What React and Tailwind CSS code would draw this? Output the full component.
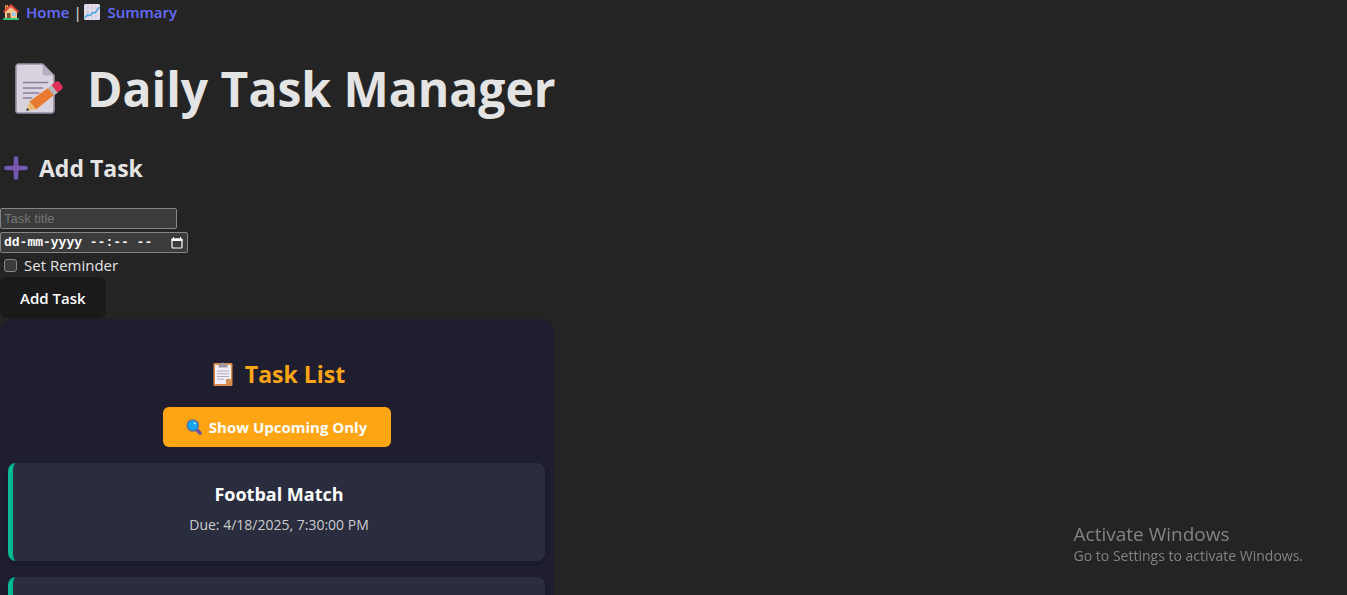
import React from "react";

function HouseIcon({ className }) {
  return (
    <svg viewBox="0 0 16 16" className={className} aria-hidden="true">
      <path d="M2 1h3v5H2z" fill="#e6a23c" />
      <path d="M3 1h1v4H3z" fill="#8a5a44" />
      <path d="M2 8l6-6 6 6v7H2z" fill="#f5c58c" />
      <path d="M8 0l8 7.4-1.3 1.4L8 3 1.300 8.800 0 7.400z" fill="#e8453c" />
      <path d="M4 9h3.500v6H4z" fill="#7d4b3c" />
      <path d="M9 8.500h3.500v3.500H9z" fill="#8ccbf5" />
      <rect y="14" width="16" height="2" rx="1" fill="#2fc477" />
    </svg>
  );
}

function ChartIcon({ className }) {
  return (
    <svg viewBox="0 0 16 16" className={className} aria-hidden="true">
      <rect width="16" height="16" rx="1.500" fill="#e6e0ee" />
      <path d="M4 0v16M8 0v16M12 0v16M0 4h16M0 8h16M0 12h16" stroke="#cbc1d6" strokeWidth=".7" />
      <path d="M.5 14L4 10.500l2 1L9 8.500l2 .3L15.500 3" fill="none" stroke="#35a4e8" strokeWidth="1.300" />
    </svg>
  );
}

function MemoIcon({ className }) {
  return (
    <svg viewBox="0 0 48 52" className={className} aria-hidden="true">
      <path d="M3.500 1h24L39 12.500V47a3 3 0 0 1-3 3H3.500A2.500 2.500 0 0 1 1 47.500v-44A2.500 2.500 0 0 1 3.500 1z" fill="#d8d3de" stroke="#9b90a6" strokeWidth="1.600" />
      <path d="M27.500 1L39 12.500H29.500a2 2 0 0 1-2-2z" fill="#b8adc1" />
      <path d="M8.500 19.500h24M8.500 25h19M8.500 30h15M8.500 35h8" stroke="#8b7c99" strokeWidth="1.700" strokeLinecap="round" />
      <path d="M14.500 38.500L33 25l6 7-18 14.500z" fill="#e97b30" />
      <path d="M14.500 38.500l6.500 8-9.500 1z" fill="#e9bb78" />
      <path d="M12.200 45l2 2.300-3 .5z" fill="#222" />
      <path d="M33 25l3.500-3 6.500 7.500-4 3z" fill="#b8b8bb" />
      <path d="M36.500 22l4-3.200c1.200-1 3-.8 4 .4l2.700 3.500c.9 1.200.6 2.800-.6 3.700l-4 3.100z" fill="#e12f59" />
    </svg>
  );
}

function PlusIcon({ className }) {
  return (
    <svg viewBox="0 0 24 24" className={className} aria-hidden="true">
      <path d="M12 2.500v19M2.500 12h19" stroke="#7556b4" strokeWidth="4.600" strokeLinecap="round" />
    </svg>
  );
}

function ClipboardIcon({ className }) {
  return (
    <svg viewBox="0 0 20 24" className={className} aria-hidden="true">
      <rect x=".5" y="1" width="19" height="23" rx="1.200" fill="#d98c4b" />
      <path d="M2 3h16v14l-5 5H2z" fill="#f2eff6" />
      <path d="M13 22v-4a1 1 0 0 1 1-1h4z" fill="#c98a50" />
      <path d="M5.500 2H8.500a1.500 1.500 0 0 1 3 0h3v3.500h-9z" fill="#9a97a0" />
      <path d="M4 9h12M4 11.800h12M4 14.500h12M4 17.200h7" stroke="#b2a9bd" />
    </svg>
  );
}

function MagnifierIcon({ className }) {
  return (
    <svg viewBox="0 0 16 16" className={className} aria-hidden="true">
      <path d="M10 10l4 4" stroke="#67549b" strokeWidth="3.600" strokeLinecap="round" />
      <circle cx="6.800" cy="6.500" r="5.600" fill="#15a6f3" stroke="#5667a5" strokeWidth="1.200" />
      <circle cx="8.800" cy="4.300" r="1.100" fill="#c8efff" />
    </svg>
  );
}

function CalendarIcon({ className }) {
  return (
    <svg viewBox="0 0 12 12" className={className} aria-hidden="true">
      <rect x="1" y="2" width="10" height="9" rx="1" fill="none" stroke="#fff" strokeWidth="1.200" />
      <path d="M1 2h10v1.500H1zM2.500 0v2M9.500 0v2" fill="#fff" stroke="#fff" />
    </svg>
  );
}

function TaskCard({ title, due }) {
  return (
    <li className="h-[98px] rounded-lg border-l-[5px] border-[#00b894] bg-[#2a2d3e] pt-4 text-center shadow-md">
      {title && <h3 className="text-[18px] leading-[30px] font-bold text-white">{title}</h3>}
      {due && <p className="mt-1 text-[14px] leading-6 text-[#cccccc]">{due}</p>}
    </li>
  );
}

export default function App() {
  return (
    <div className="h-screen overflow-hidden bg-[#242424] font-['Open_Sans','Noto_Sans',sans-serif] text-[15px] leading-6 text-[#e4e4e4]">
      <nav className="flex items-center gap-1 pl-[3px]">
        <a href="#home" className="flex items-center gap-[7px] font-semibold text-[#646cff]">
          <HouseIcon className="size-4" />
          Home
        </a>
        <span className="w-[7px] text-center">|</span>
        <a href="#summary" className="flex items-center gap-[7px] font-semibold text-[#646cff]">
          <ChartIcon className="size-4" />
          Summary
        </a>
      </nav>

      <main className="w-full max-w-[554px]">
        <h1 className="mt-[37px] flex items-center gap-6 pl-[15px] text-[48px] leading-[56px] font-bold whitespace-nowrap">
          <MemoIcon className="h-[52px] w-12 shrink-0" />
          Daily Task Manager
        </h1>

        <h2 className="mt-[35px] flex items-center gap-[11px] pl-1 text-[23px] leading-8 font-bold">
          <PlusIcon className="size-6" />
          Add Task
        </h2>

        <form className="mt-6 flex flex-col items-start" onSubmit={(e) => e.preventDefault()}>
          <input
            type="text"
            aria-label="Task title"
            placeholder="Task title"
            className="h-[21px] w-[177px] rounded-xs border border-[#858585] bg-[#3b3b3b] px-[3px] font-['Liberation_Sans',sans-serif] text-[13px] text-white placeholder:text-[#757575]"
          />
          <div className="mt-[3px] flex h-[21px] w-[188px] items-center rounded-xs border border-[#858585] bg-[#3b3b3b] pr-1 pl-[3px]">
            <input
              type="text"
              aria-label="Due date and time"
              placeholder="dd-mm-yyyy --:-- --"
              className="min-w-0 flex-1 font-['Liberation_Mono',monospace] text-[13px] font-bold text-white placeholder:text-white placeholder:opacity-100"
            />
            <button type="button" aria-label="Open calendar">
              <CalendarIcon className="size-3" />
            </button>
          </div>
          <label className="flex items-center gap-[7px] pl-1">
            <input
              type="checkbox"
              className="size-[13px] appearance-none rounded-[3px] border border-[#858585] bg-[#3b3b3b] checked:bg-[#99c8ff]"
            />
            Set Reminder
          </label>
          <button type="submit" className="h-[42px] rounded-lg bg-[#1a1a1a] px-5 text-[15px] font-semibold text-white">
            Add Task
          </button>
        </form>

        <section className="rounded-xl bg-[#1e1e2f] pt-[39px] pr-[9px] pb-8 pl-2">
          <h2 className="flex items-center justify-center gap-3 pl-[5px] text-[23px] leading-8 font-bold text-[#ffa514]">
            <ClipboardIcon className="h-6 w-5" />
            Task List
          </h2>
          <button
            type="button"
            className="mx-auto mt-[17px] flex h-10 w-[228px] items-center justify-center gap-[7px] rounded-md bg-[#ffa514] text-[15px] font-bold text-white"
          >
            <MagnifierIcon className="size-4" />
            Show Upcoming Only
          </button>
          <ul className="mt-4 flex flex-col gap-4">
            <TaskCard title="Footbal Match" due="Due: 4/18/2025, 7:30:00 PM" />
            <TaskCard />
          </ul>
        </section>
      </main>

      <aside className="pointer-events-none fixed right-11 bottom-[29px] text-[#838383]">
        <p className="text-[19px] leading-6">Activate Windows</p>
        <p className="text-[14px] leading-5">Go to Settings to activate Windows.</p>
      </aside>
    </div>
  );
}
